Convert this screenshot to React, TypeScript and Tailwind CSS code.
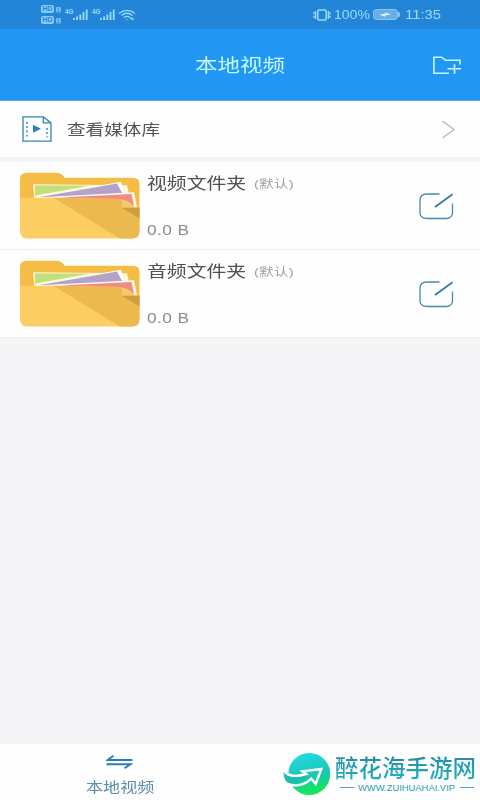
import type { ReactNode } from 'react';

function Wide({ children, className = 'scale-x-[1.24]' }: { children: ReactNode; className?: string }) {
  return <span className={`block whitespace-nowrap origin-left ${className}`}>{children}</span>;
}

function Signal() {
  return (
    <svg className="w-[23px] h-[14px]" viewBox="0 0 23 14" fill="#9bdcfa">
      <text x="0" y="6" fontSize="7" fontWeight="700" textLength="8.5" lengthAdjust="spacingAndGlyphs">4G</text>
      <rect x="8" y="10" width="1.8" height="2" />
      <rect x="11.2" y="8.5" width="1.8" height="3.5" />
      <rect x="14.4" y="6.5" width="1.8" height="5.5" />
      <rect x="17.6" y="4" width="1.8" height="8" />
      <rect x="20.8" y="1.5" width="1.8" height="10.5" />
    </svg>
  );
}

function HdBadge({ slot }: { slot: string }) {
  return (
    <svg className="w-[21px] h-[8px]" viewBox="0 0 21 8" fill="#86cdf5">
      <rect x="0" y="0" width="13" height="8" rx="2" />
      <text x="1.5" y="6.4" fontSize="6.5" fontWeight="700" fill="#2385d8" textLength="10" lengthAdjust="spacingAndGlyphs">HD</text>
      <rect x="15" y="2" width="5" height="5.5" rx="1" opacity=".8" />
      <text x="16" y="6.7" fontSize="5" fill="#2385d8">{slot}</text>
    </svg>
  );
}

function StatusBar() {
  return (
    <div className="h-[29px] bg-[#2385d8] text-[#9bdcfa] flex items-center pl-[41px] pr-[38px]">
      <div className="flex flex-col gap-[3px] w-6">
        <HdBadge slot="1" />
        <HdBadge slot="2" />
      </div>
      <Signal />
      <div className="w-1" />
      <Signal />
      <svg className="w-[18px] h-3 ml-[3px]" viewBox="0 0 18 12" fill="none" stroke="#9bdcfa" strokeWidth="1.3">
        <path d="M1 4.5Q9-1.8 17 4.5M3.5 6.5Q9 2 14.5 6.5M6 8.7Q9 6.2 12 8.7M8.5 10.7h1" />
        <path d="M12 10l2-1.5V11l2-1.5" strokeWidth="1" />
      </svg>
      <div className="flex-1" />
      <svg className="w-[18px] h-3 mr-[3px]" viewBox="0 0 18 12" fill="none" stroke="#9bdcfa" strokeWidth="1.5">
        <rect x="4.8" y="1" width="8.4" height="10" rx="1" />
        <path d="M2.6 2v8M.9 3.2v2M.9 6.8v2M15.4 2v8M17.1 3.2v2M17.1 6.8v2" strokeWidth="1.4" />
      </svg>
      <div className="w-[39px] text-[12px] leading-none"><Wide className="scale-x-[1.17]">100%</Wide></div>
      <svg className="w-[27px] h-[11px]" viewBox="0 0 27 11">
        <rect x=".5" y=".5" width="24" height="10" rx="3" fill="#67aee9" stroke="#8bc9f3" />
        <rect x="25.2" y="3" width="1.5" height="5" rx=".7" fill="#9bdcfa" />
        <path d="M6 5.6l6-.8V3.5l6 2.1-6 .8v1.3z" fill="#dcf5ff" />
      </svg>
      <div className="w-[37px] ml-[5px] text-[12px] leading-none"><Wide>11:35</Wide></div>
    </div>
  );
}

function Header() {
  return (
    <header className="h-[72px] bg-[#2196f3] border-b border-[#5ca8df] flex items-center pt-px pl-[195px] pr-[19px]">
      <h1 className="flex-1 pt-[2px] text-[18px] leading-none text-[#c6fbff]"><Wide className="scale-x-[1.25]">本地视频</Wide></h1>
      <svg className="w-[28px] h-[19px]" viewBox="0 0 28 19" fill="none" stroke="#c4fbff" strokeWidth="1.6">
        <path d="M16 17.2H.9V1.2h7.6l4 3H27v4.3M14.5 12.7H28M21.5 8.2v9.5" />
      </svg>
    </header>
  );
}

function MediaIcon() {
  return (
    <svg className="w-[30px] h-[26px]" viewBox="0 0 30 26" fill="none" stroke="#3286ac" strokeWidth="1.3">
      <path d="M1 .9h20.5l7.5 6v18.2H1z" />
      <path d="M21.3 1v5.8H29" />
      <path d="M11 8.8v8l8-4z" fill="#2c82b8" stroke="none" />
      <path d="M5 6v15.5M25 12v9.5" strokeWidth="1.6" strokeDasharray="1.7 2.6" />
    </svg>
  );
}

function Folder() {
  return (
    <svg className="w-[121px] h-[67px]" viewBox="0 0 121 67">
      <path d="M1 7Q1 .7 8 .7h29q6 0 8.5 5h68q7 0 7 6V40H1z" fill="#f5bd45" />
      <path d="M14 12.2l94 1 2.5 11-95 2z" fill="#fff6d6" />
      <path d="M16 13.5h55L16 23.5z" fill="#bfe07a" />
      <path d="M13 25.5L102 9.7l4.5 14z" fill="#fffdf5" />
      <path d="M18 25.4L98 11.5l6 11z" fill="#b2a3ca" />
      <path d="M13 25.8L115 20.3l3 15H103z" fill="#fffaf0" />
      <path d="M40 25.6L112.5 22l2.5 12-12-6z" fill="#f28b83" />
      <path d="M1 25.7h34l68 1.3v8.7h17.5V59q0 7.5-8 7.5H9Q1 66.5 1 59z" fill="#fccd62" />
      <path d="M34.5 25.7l68.5 1.3v8.7h17.5V59q0 7.5-8 7.5H101z" fill="#ecb94f" />
      <path d="M102.7 27.5q9 1 13.5 8.4h-13.5z" fill="#f6c772" />
      <path d="M102.7 35.7h17.8V46.3z" fill="#cf9d3c" />
    </svg>
  );
}

function EditIcon() {
  return (
    <svg className="w-[35px] h-[27px]" viewBox="0 0 35 27" fill="none" stroke="#428bab" strokeWidth="1.3">
      <path d="M20.5 1H8Q1 1 1 7v12.5q0 6 7 6h19q6.5 0 6.5-6V10.5" />
      <path d="M16 14L33.5 1.3" stroke="#347c9e" strokeWidth="1.8" />
    </svg>
  );
}

function FolderRow({ name }: { name: string }) {
  return (
    <div className="h-[88px] bg-[#fefefe] border-b border-[#eeeeee] flex items-start pl-[19px] pr-[26px]">
      <div className="pt-[10px]"><Folder /></div>
      <div className="flex-1 pl-[7px] pt-[13px]">
        <div className="flex items-center h-[18px]">
          <div className="w-[107px] text-[16px] leading-none text-[#505050]"><Wide>{name}</Wide></div>
          <div className="text-[11px] leading-none text-[#a0a0a0]"><Wide className="scale-x-[1.35]">(默认)</Wide></div>
        </div>
        <div className="mt-[30px] text-[14px] leading-none text-[#8b8b8b] tracking-[0.3px]"><Wide>0.0 B</Wide></div>
      </div>
      <div className="pt-[31px]"><EditIcon /></div>
    </div>
  );
}

function Watermark() {
  return (
    <div className="flex items-center">
      <svg className="w-[48px] h-[44px] mt-[4px]" viewBox="0 0 48 44">
        <defs>
          <linearGradient id="globe" x1=".3" y1="0" x2=".5" y2="1">
            <stop offset="0" stopColor="#22dce2" />
            <stop offset=".55" stopColor="#1cc5b4" />
            <stop offset="1" stopColor="#12ea4c" />
          </linearGradient>
        </defs>
        <circle cx="26.3" cy="22" r="21" fill="url(#globe)" />
        <path d="M.8 18.5Q-.5 28 7 32.5L22 28V22Q6 27 .8 18.5z" fill="#1dbcb4" />
        <path
          d="M.8 18.5Q6 27 23.3 22L19.5 19.3 38.3 17 32.7 32 28.3 26.7Q18 36.5 4.5 32"
          fill="none"
          stroke="white"
          strokeWidth="2.4"
        />
      </svg>
      <div className="ml-[4px] w-[142px] pt-[6px]">
        <div className="text-[23.5px] leading-[26px] font-medium whitespace-nowrap bg-linear-to-b from-[#238dab] to-[#25b4bd] bg-clip-text text-transparent">醉花海手游网</div>
        <div className="flex items-center justify-between -mt-px pl-[5px] pr-[3px]">
          <span className="w-[14px] h-px bg-[#48aab9]" />
          <svg className="w-[98px] h-[13px] overflow-visible" viewBox="0 0 98 13">
            <text x="0" y="10" fontSize="9.8" fill="#279db0" textLength="97" lengthAdjust="spacingAndGlyphs">WWW.ZUIHUAHAI.VIP</text>
          </svg>
          <span className="w-[14px] h-px bg-[#48aab9]" />
        </div>
      </div>
    </div>
  );
}

export default function App() {
  return (
    <div className="w-[480px] h-[800px] overflow-hidden flex flex-col bg-[#f5f5f8] font-['Liberation_Sans','Noto_Sans_CJK_SC',sans-serif]">
      <StatusBar />
      <Header />
      <div className="h-[56px] bg-[#fefefe] flex items-center pl-[22px] pr-[25px]">
        <MediaIcon />
        <div className="flex-1 pl-[15px] text-[15px] leading-none text-[#555555]"><Wide>查看媒体库</Wide></div>
        <svg className="w-[13px] h-[19px]" viewBox="0 0 13 19" fill="none" stroke="#b3b3b3" strokeWidth="1.2">
          <path d="M.5 1L12 9.5.5 18" />
        </svg>
      </div>
      <div className="h-[5px] bg-[#f5f5f6]" />
      <FolderRow name="视频文件夹" />
      <FolderRow name="音频文件夹" />
      <div className="flex-1" />
      <footer className="h-[56px] bg-[#fefefe] flex items-center pl-[86px] pr-[3px]">
        <div className="flex-1 pt-[4px]">
          <svg className="w-[27px] h-[14px] ml-[20px]" viewBox="0 0 27 14" fill="none" stroke="#2681b0" strokeWidth="1.9">
            <path d="M7.5.8L1.5 5H26.5M.5 9.2h24l-6 4" />
          </svg>
          <div className="mt-[11px] text-[14px] leading-none text-[#5a8da6]"><Wide className="scale-x-[1.22]">本地视频</Wide></div>
        </div>
        <Watermark />
      </footer>
    </div>
  );
}
